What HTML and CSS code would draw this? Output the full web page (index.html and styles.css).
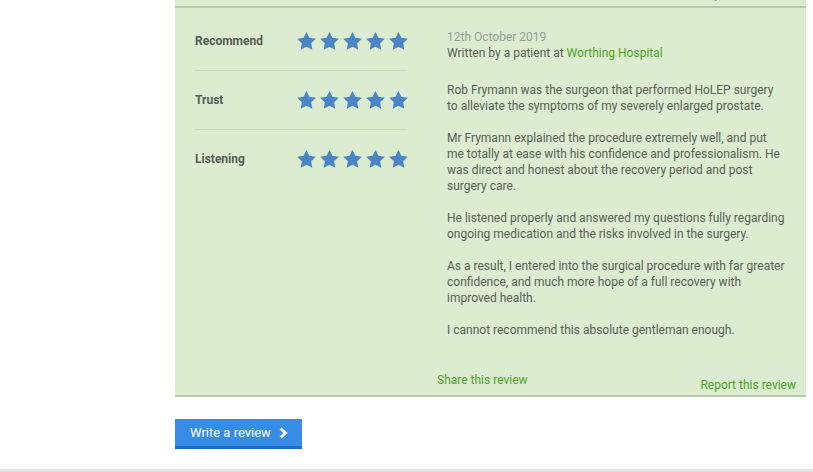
FILE: index.html
```html
<!DOCTYPE html>
<html lang="en">
<head>
<meta charset="utf-8">
<title>Reviews</title>
<link rel="stylesheet" href="styles.css">
</head>
<body>
<div class="page">
  <div class="card card-prev">
    <div class="prev-footer"><a class="link report" href="#">Report this review</a></div>
  </div>

  <div class="card">
    <div class="card-body">
      <div class="ratings">
        <div class="rating-row">
          <span class="rating-label">Recommend</span>
          <span class="stars">
            <svg class="star" viewBox="2 2 20 19.3"><polygon points="12,2 15.09,8.26 22,9.27 17,14.14 18.18,21.02 12,17.77 5.82,21.02 7,14.14 2,9.27 8.91,8.26"/></svg>
            <svg class="star" viewBox="2 2 20 19.3"><polygon points="12,2 15.09,8.26 22,9.27 17,14.14 18.18,21.02 12,17.77 5.82,21.02 7,14.14 2,9.27 8.91,8.26"/></svg>
            <svg class="star" viewBox="2 2 20 19.3"><polygon points="12,2 15.09,8.26 22,9.27 17,14.14 18.18,21.02 12,17.77 5.82,21.02 7,14.14 2,9.27 8.91,8.26"/></svg>
            <svg class="star" viewBox="2 2 20 19.3"><polygon points="12,2 15.09,8.26 22,9.27 17,14.14 18.18,21.02 12,17.77 5.82,21.02 7,14.14 2,9.27 8.91,8.26"/></svg>
            <svg class="star" viewBox="2 2 20 19.3"><polygon points="12,2 15.09,8.26 22,9.27 17,14.14 18.18,21.02 12,17.77 5.82,21.02 7,14.14 2,9.27 8.91,8.26"/></svg>
          </span>
        </div>
        <div class="rating-row">
          <span class="rating-label">Trust</span>
          <span class="stars">
            <svg class="star" viewBox="2 2 20 19.3"><polygon points="12,2 15.09,8.26 22,9.27 17,14.14 18.18,21.02 12,17.77 5.82,21.02 7,14.14 2,9.27 8.91,8.26"/></svg>
            <svg class="star" viewBox="2 2 20 19.3"><polygon points="12,2 15.09,8.26 22,9.27 17,14.14 18.18,21.02 12,17.77 5.82,21.02 7,14.14 2,9.27 8.91,8.26"/></svg>
            <svg class="star" viewBox="2 2 20 19.3"><polygon points="12,2 15.09,8.26 22,9.27 17,14.14 18.18,21.02 12,17.77 5.82,21.02 7,14.14 2,9.27 8.91,8.26"/></svg>
            <svg class="star" viewBox="2 2 20 19.3"><polygon points="12,2 15.09,8.26 22,9.27 17,14.14 18.18,21.02 12,17.77 5.82,21.02 7,14.14 2,9.27 8.91,8.26"/></svg>
            <svg class="star" viewBox="2 2 20 19.3"><polygon points="12,2 15.09,8.26 22,9.27 17,14.14 18.18,21.02 12,17.77 5.82,21.02 7,14.14 2,9.27 8.91,8.26"/></svg>
          </span>
        </div>
        <div class="rating-row">
          <span class="rating-label">Listening</span>
          <span class="stars">
            <svg class="star" viewBox="2 2 20 19.3"><polygon points="12,2 15.09,8.26 22,9.27 17,14.14 18.18,21.02 12,17.77 5.82,21.02 7,14.14 2,9.27 8.91,8.26"/></svg>
            <svg class="star" viewBox="2 2 20 19.3"><polygon points="12,2 15.09,8.26 22,9.27 17,14.14 18.18,21.02 12,17.77 5.82,21.02 7,14.14 2,9.27 8.91,8.26"/></svg>
            <svg class="star" viewBox="2 2 20 19.3"><polygon points="12,2 15.09,8.26 22,9.27 17,14.14 18.18,21.02 12,17.77 5.82,21.02 7,14.14 2,9.27 8.91,8.26"/></svg>
            <svg class="star" viewBox="2 2 20 19.3"><polygon points="12,2 15.09,8.26 22,9.27 17,14.14 18.18,21.02 12,17.77 5.82,21.02 7,14.14 2,9.27 8.91,8.26"/></svg>
            <svg class="star" viewBox="2 2 20 19.3"><polygon points="12,2 15.09,8.26 22,9.27 17,14.14 18.18,21.02 12,17.77 5.82,21.02 7,14.14 2,9.27 8.91,8.26"/></svg>
          </span>
        </div>
      </div>

      <div class="review">
        <div class="meta">
          <div class="date">12th October 2019</div>
          <div class="author">Written by a patient at <a class="link" href="#">Worthing Hospital</a></div>
        </div>
        <p>Rob Frymann was the surgeon that performed HoLEP surgery<br>to alleviate the symptoms of my severely enlarged prostate.</p>
        <p>Mr Frymann explained the procedure extremely well, and put<br>me totally at ease with his confidence and professionalism. He<br>was direct and honest about the recovery period and post<br>surgery care.</p>
        <p>He listened properly and answered my questions fully regarding<br>ongoing medication and the risks involved in the surgery.</p>
        <p>As a result, I entered into the surgical procedure with far greater<br>confidence, and much more hope of a full recovery with<br>improved health.</p>
        <p>I cannot recommend this absolute gentleman enough.</p>
      </div>
    </div>
    <div class="card-footer">
      <a class="link share" href="#">Share this review</a>
      <a class="link report" href="#">Report this review</a>
    </div>
  </div>

  <a class="btn" href="#">Write a review
    <svg class="chev" viewBox="0 0 9 12"><polyline points="1.6,1.5 6.4,6 1.6,10.5"/></svg>
  </a>
</div>
<div class="bottom-rule"></div>
</body>
</html>
```

FILE: styles.css
```css
* { box-sizing: border-box; }

html, body {
  margin: 0;
  padding: 0;
  background: #ffffff;
}

body {
  font-family: Roboto, "Liberation Sans", Arial, sans-serif;
  font-size: 12px;
  line-height: 16px;
  color: #5a605a;
  overflow: hidden;
  height: 472px;
}

.page {
  padding-left: 175px;
  width: 806px;
}

.card {
  background: #dbecd0;
  border-bottom: 2px solid #b7c9a8;
  padding: 4px 10px 2px 20px;
}

.card-prev {
  height: 8px;
  padding-top: 0;
  padding-bottom: 0;
  overflow: hidden;
  display: flex;
  justify-content: flex-end;
  align-items: flex-end;
}

.prev-footer {
  flex: none;
  height: 16px;
  margin-bottom: 4px;
  line-height: 16px;
}

.card-body {
  display: flex;
  align-items: flex-start;
}

.ratings {
  width: 212px;
  flex: none;
}

.rating-row {
  display: flex;
  align-items: center;
  height: 59px;
  border-bottom: 1px solid #c6dbb9;
  padding-bottom: 1px;
}

.rating-row:last-child {
  border-bottom: none;
}

.rating-label {
  width: 102px;
  flex: none;
  font-weight: bold;
  color: #555c55;
}

.stars {
  display: flex;
  gap: 4px;
}

.star {
  width: 19px;
  height: 18px;
  fill: #4a85c8;
  display: block;
}

.review {
  margin-left: 40px;
  margin-top: 17px;
  width: 350px;
  flex: none;
}

.meta {
  margin-bottom: 21px;
}

.date {
  color: #9a9e98;
}

.review p {
  margin: 0 0 16px;
  white-space: nowrap;
}

.review p:last-child {
  margin-bottom: 0;
}

.link {
  color: #4ba21f;
  text-decoration: none;
}

.card-footer {
  display: flex;
  justify-content: space-between;
  align-items: flex-start;
  margin-top: 34px;
  padding-left: 242px;
  height: 21px;
}

.card-footer .report {
  margin-top: 5px;
}

.btn {
  display: inline-flex;
  align-items: center;
  gap: 8px;
  margin-top: 22px;
  height: 30px;
  width: 127px;
  padding: 0 0 0 15px;
  background: #378de6;
  border-bottom: 3px solid #1b6bc6;
  color: #ffffff;
  font-size: 13px;
  text-decoration: none;
  vertical-align: top;
}

.chev {
  width: 9px;
  height: 12px;
  fill: none;
  stroke: #ffffff;
  stroke-width: 3;
  display: block;
}

.bottom-rule {
  margin-top: 20px;
  height: 4px;
  background: #e2e2e2;
}
```
